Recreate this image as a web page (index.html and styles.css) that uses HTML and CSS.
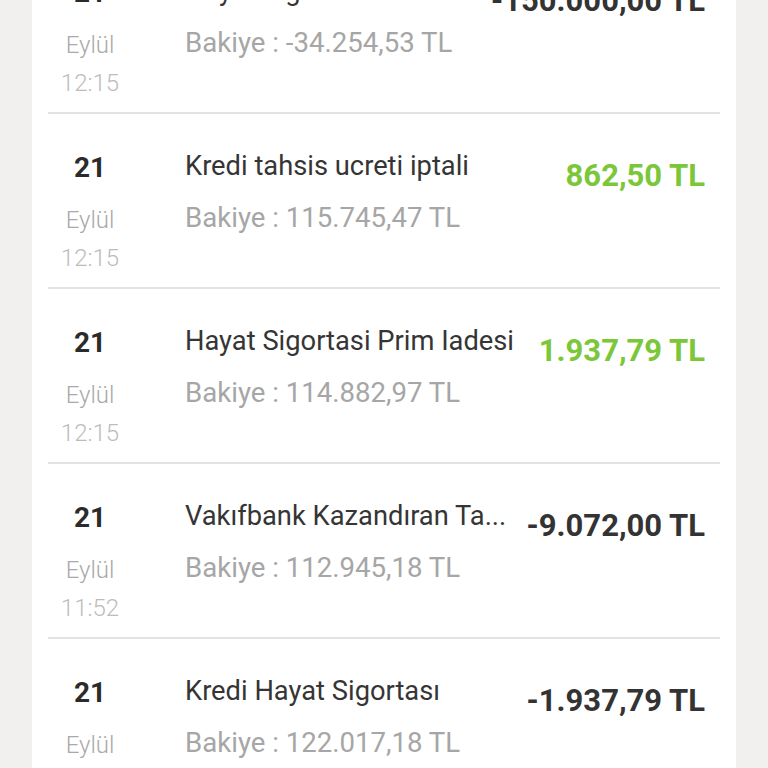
FILE: index.html
```html
<!DOCTYPE html>
<html lang="tr">
<head>
<meta charset="utf-8">
<title>Hesap Hareketleri</title>
<link rel="stylesheet" href="styles.css">
</head>
<body>
<div class="card">
  <div class="row">
    <div class="date"><div class="day">21</div><div class="month">Eylül</div><div class="time">12:15</div></div>
    <div class="main"><div class="title">Hayat Sigortası Ödemesi</div><div class="balance">Bakiye : -34.254,53 TL</div></div>
    <div class="amount neg">-150.000,00 TL</div>
  </div>
  <div class="row">
    <div class="date"><div class="day">21</div><div class="month">Eylül</div><div class="time">12:15</div></div>
    <div class="main"><div class="title">Kredi tahsis ucreti iptali</div><div class="balance">Bakiye : 115.745,47 TL</div></div>
    <div class="amount pos">862,50 TL</div>
  </div>
  <div class="row">
    <div class="date"><div class="day">21</div><div class="month">Eylül</div><div class="time">12:15</div></div>
    <div class="main"><div class="title">Hayat Sigortasi Prim Iadesi</div><div class="balance">Bakiye : 114.882,97 TL</div></div>
    <div class="amount pos">1.937,79 TL</div>
  </div>
  <div class="row">
    <div class="date"><div class="day">21</div><div class="month">Eylül</div><div class="time">11:52</div></div>
    <div class="main"><div class="title">Vakıfbank Kazandıran Ta...</div><div class="balance">Bakiye : 112.945,18 TL</div></div>
    <div class="amount neg">-9.072,00 TL</div>
  </div>
  <div class="row">
    <div class="date"><div class="day">21</div><div class="month">Eylül</div><div class="time">11:52</div></div>
    <div class="main"><div class="title">Kredi Hayat Sigortası</div><div class="balance">Bakiye : 122.017,18 TL</div></div>
    <div class="amount neg">-1.937,79 TL</div>
  </div>
</div>
</body>
</html>
```
FILE: styles.css
```css
html, body {
  margin: 0;
  padding: 0;
  background: #f1f0ee;
  overflow: hidden;
  height: 768px;
}
body {
  font-family: Roboto, "Noto Sans", sans-serif;
}
.card {
  background: #ffffff;
  margin: -61px 0 0 32px;
  width: 704px;
  padding: 0 16px;
  box-sizing: border-box;
  min-height: 900px;
}
.row {
  display: flex;
  align-items: flex-start;
  height: 175px;
  box-sizing: border-box;
  border-bottom: 2px solid #e2e2e2;
  padding-top: 37px;
}
.date {
  width: 84px;
  display: flex;
  flex-direction: column;
  align-items: center;
  flex: none;
}
.day {
  font-size: 28px;
  line-height: 34px;
  font-weight: 700;
  color: #2b2b2b;
}
.month {
  font-size: 24px;
  line-height: 37px;
  margin-top: 17px;
  font-weight: 300;
  color: #a9a9a9;
}
.time {
  font-size: 24px;
  line-height: 39px;
  font-weight: 300;
  color: #bcbcbc;
}
.main {
  margin-left: 53px;
  flex: 1;
  min-width: 0;
}
.title {
  font-size: 27.3px;
  line-height: 30px;
  color: #353535;
  white-space: nowrap;
}
.balance {
  margin-top: 22px;
  font-size: 27.6px;
  line-height: 30px;
  color: #a6a6a6;
  white-space: nowrap;
}
.amount {
  flex: none;
  font-size: 31px;
  line-height: 36px;
  font-weight: 700;
  padding-top: 7px;
  padding-right: 15px;
  white-space: nowrap;
}
.neg { color: #333333; }
.pos { color: #7cc63a; }
```
